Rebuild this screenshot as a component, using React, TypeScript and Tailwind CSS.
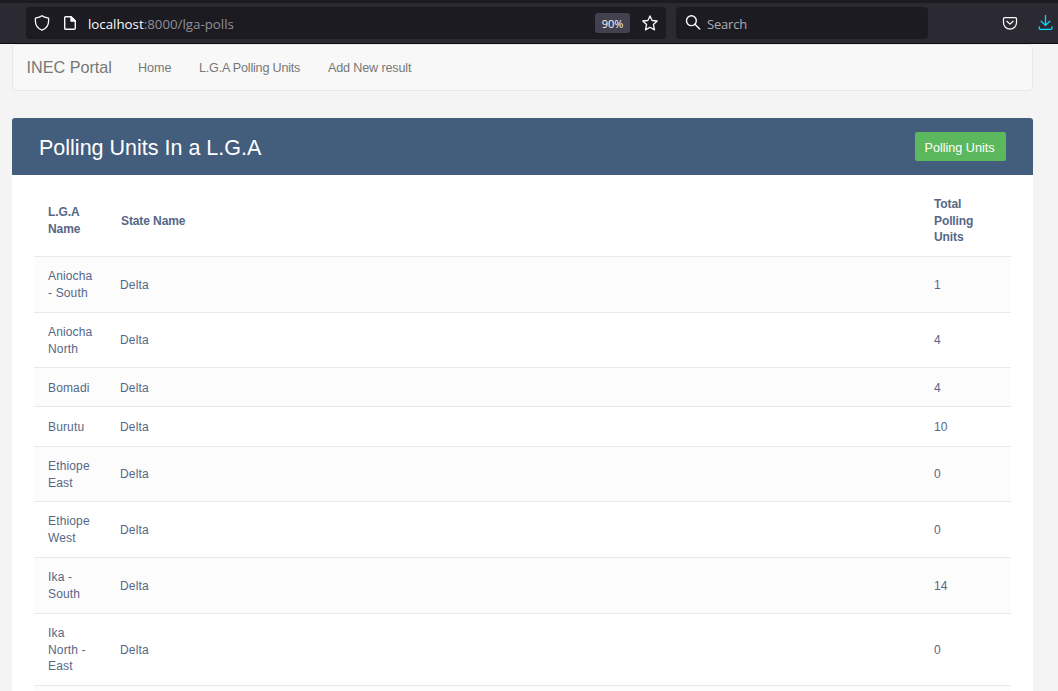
import React from "react";

type Row = { name: string[]; state: string; total: number; height: string; striped: boolean };

const rows: Row[] = [
  { name: ["Aniocha", "- South"], state: "Delta", total: 1, height: "h-[56px] pt-px", striped: true },
  { name: ["Aniocha", "North"], state: "Delta", total: 4, height: "h-[55px] pt-px", striped: false },
  { name: ["Bomadi"], state: "Delta", total: 4, height: "h-[39px] pt-0.5", striped: true },
  { name: ["Burutu"], state: "Delta", total: 10, height: "h-[40px] pt-px", striped: false },
  { name: ["Ethiope", "East"], state: "Delta", total: 0, height: "h-[55px] pt-px", striped: true },
  { name: ["Ethiope", "West"], state: "Delta", total: 0, height: "h-[56px] pt-px", striped: false },
  { name: ["Ika -", "South"], state: "Delta", total: 14, height: "h-[56px] pt-px", striped: true },
  { name: ["Ika", "North -", "East"], state: "Delta", total: 0, height: "h-[72px] pt-px", striped: false },
];

function Lines({ items }: { items: string[] }) {
  return (
    <div>
      {items.map((item) => (
        <div key={item}>{item}</div>
      ))}
    </div>
  );
}

function BrowserBar() {
  return (
    <header className="flex h-11 shrink-0 items-center border-t-[3px] border-b border-t-[#1c1b22] border-b-[#0c0c0d] bg-[#2b2a33] pl-[26px] font-['Open_Sans',sans-serif] text-[13px]">
      <div className="flex h-8 w-[640px] items-center rounded bg-[#1c1b22] pl-2 pr-2 text-[#fbfbfe]">
        <svg className="h-4 w-4" viewBox="0 0 16 16" fill="none" stroke="currentColor" strokeWidth="1.3" strokeLinejoin="round">
          <path d="M8 .7C6.500 2 4.200 2.700 1.400 3.100v2.800c0 4.200 2.600 7.600 6.600 9.200 4-1.600 6.600-5 6.600-9.200V3.100C11.800 2.700 9.500 2 8 .7Z" />
        </svg>
        <svg className="ml-3 h-4 w-4" viewBox="0 0 16 16" fill="none" stroke="currentColor" strokeWidth="1.4" strokeLinejoin="round">
          <path d="M3.700 1.700h5.300l4.300 4.300v7.300a1 1 0 0 1-1 1H3.700a1 1 0 0 1-1-1V2.700a1 1 0 0 1 1-1Z" />
          <path d="M9 1.700v4.300h4.300Z" fill="currentColor" />
        </svg>
        <span className="ml-[10px] whitespace-nowrap pt-px text-[13.3px] leading-5">
          localhost<span className="text-[#8f8f99]">:8000/lga-polls</span>
        </span>
        <span className="ml-auto flex h-5 w-[35px] items-center justify-center rounded-[3px] bg-[#42414d] pt-[3px] text-[11px]">90%</span>
        <svg className="ml-3 h-4 w-4" viewBox="0 0 16 16" fill="none" stroke="currentColor" strokeWidth="1.3" strokeLinejoin="round">
          <path d="M8 .9 10.100 5.500 15.200 6 11.400 9.400 12.500 14.900 8 12.300 3.500 14.900 4.600 9.400.8 6 5.900 5.500Z" />
        </svg>
      </div>
      <div className="ml-[10px] flex h-8 w-[252px] items-center rounded bg-[#1c1b22] pl-[9px] text-[#fbfbfe]">
        <svg className="h-4 w-4" viewBox="0 0 16 16" fill="none" stroke="currentColor" strokeWidth="1.4" strokeLinecap="round">
          <circle cx="6.400" cy="5.700" r="4.900" />
          <path d="m10 9.300 4.700 4.700" />
        </svg>
        <span className="ml-[6px] pt-[3px] text-[13px] tracking-[-0.2px] text-[#adadb3]">Search</span>
      </div>
      <svg className="ml-[74px] h-4 w-4 shrink-0 text-[#fbfbfe]" viewBox="0 0 16 16" fill="none" stroke="currentColor" strokeWidth="1.250" strokeLinejoin="round" strokeLinecap="round">
        <path d="M2.800 2.500h10.400a1.300 1.300 0 0 1 1.300 1.300v4a6.500 6.300 0 0 1-13 0v-4a1.300 1.300 0 0 1 1.300-1.300Z" />
        <path d="M4.900 6.300 8 9.100 11.100 6.300" />
      </svg>
      <svg className="ml-5 h-4 w-4 shrink-0 text-[#00ddff]" viewBox="0 0 16 16" fill="none" stroke="currentColor" strokeWidth="1.300" strokeLinejoin="round" strokeLinecap="round">
        <path d="M7.500.5v10M3.200 6.200l4.300 4.200 4.300-4.200M1.200 11.800v1a1.600 1.600 0 0 0 1.600 1.600h9.600a1.600 1.600 0 0 0 1.600-1.600v-1" />
      </svg>
    </header>
  );
}

export default function App() {
  return (
    <div className="flex h-[691px] w-[1058px] flex-col overflow-hidden bg-[#f4f4f4] font-['Liberation_Sans',Arial,sans-serif]">
      <BrowserBar />
      <nav className="ml-3 flex h-[47px] w-[1021px] shrink-0 items-center rounded border border-[#e7e7e7] bg-[#f8f8f8] pl-[14px] text-[12.6px] text-[#777777]">
        <a className="-ml-[0.5px] w-[111.5px] text-[16.2px]">INEC Portal</a>
        <a className="w-[61px] pt-0.5">Home</a>
        <a className="w-[129px] pt-0.5 tracking-[-0.2px]">L.G.A Polling Units</a>
        <a className="pt-0.5 tracking-[-0.15px]">Add New result</a>
      </nav>
      <main className="mt-[27px] ml-3 flex min-h-0 w-[1021px] flex-1 flex-col overflow-hidden rounded-t-[3px] bg-white">
        <div className="flex h-[57px] shrink-0 items-center justify-between bg-[#435d7d] px-[27px] text-white">
          <h2 className="pt-[2px] text-[21.5px] leading-6">Polling Units In a L.G.A</h2>
          <button className="h-[29px] w-[91px] rounded-[2px] bg-[#5cb85c] pt-[3px] pr-0.5 text-[12.6px]">Polling Units</button>
        </div>
        <div className="mx-[22px] text-[12px] leading-[16.7px] text-[#566787]">
          <div className="grid h-[81px] grid-cols-[72px_814px_77px] items-center pt-[11px] pl-[14px] font-bold tracking-[-0.1px]">
            <Lines items={["L.G.A", "Name"]} />
            <span className="pl-px">State Name</span>
            <Lines items={["Total", "Polling", "Units"]} />
          </div>
          {rows.map((row) => (
            <div
              key={row.name.join(" ")}
              className={`grid grid-cols-[72px_814px_77px] items-center border-t border-[#e9e9e9] pl-[14px] tracking-[0.15px] ${row.height} ${row.striped ? "bg-[#fcfcfc]" : "bg-white"}`}
            >
              <Lines items={row.name} />
              <span>{row.state}</span>
              <span>{row.total}</span>
            </div>
          ))}
          <div className="h-10 border-t border-[#e9e9e9] bg-[#fcfcfc]" />
        </div>
      </main>
    </div>
  );
}
